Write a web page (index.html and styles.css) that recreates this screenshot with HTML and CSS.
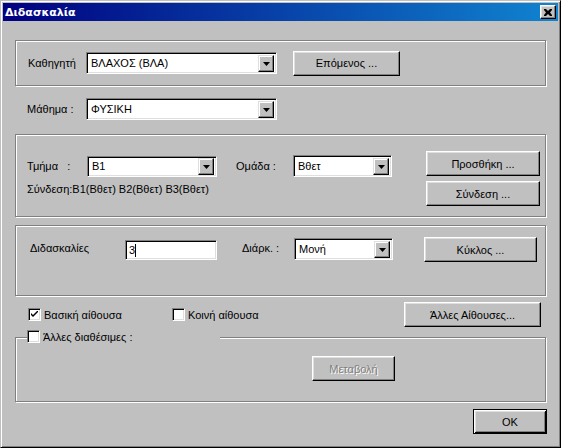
FILE: index.html
```html
<!DOCTYPE html>
<html>
<head>
<meta charset="utf-8">
<link rel="stylesheet" href="styles.css">
</head>
<body>
<div class="window">
  <div class="titlebar">
    <span class="title">Διδασκαλία</span>
    <span class="close"><svg width="8" height="7" viewBox="0 0 8 7"><path d="M0 0h2l2 2 2-2h2v1l-2 2.5 2 2.5v1h-2l-2-2-2 2h-2v-1l2-2.5-2-2.5z" fill="#000"/></svg></span>
  </div>
  <div class="client">
    <div class="group g1">
      <span class="lbl lbl-kath">Καθηγητή</span>
      <div class="combo c-kath"><span class="val">ΒΛΑΧΟΣ (ΒΛΑ)</span><span class="drop"><svg width="7" height="4" viewBox="0 0 7 4"><path d="M0 0h7l-3.5 4z" fill="#000"/></svg></span></div>
      <div class="btn b-next">Επόμενος ...</div>
    </div>

    <div class="row r-math">
      <span class="lbl lbl-math">Μάθημα :</span>
      <div class="combo c-math"><span class="val">ΦΥΣΙΚΗ</span><span class="drop"><svg width="7" height="4" viewBox="0 0 7 4"><path d="M0 0h7l-3.5 4z" fill="#000"/></svg></span></div>
    </div>

    <div class="group g2">
      <div class="g2-left">
        <div class="g2-row">
          <span class="lbl lbl-tm">Τμήμα&nbsp;&nbsp;&nbsp;:</span>
          <div class="combo c-tm"><span class="val">Β1</span><span class="drop"><svg width="7" height="4" viewBox="0 0 7 4"><path d="M0 0h7l-3.5 4z" fill="#000"/></svg></span></div>
          <span class="lbl lbl-om">Ομάδα :</span>
          <div class="combo c-om"><span class="val">Βθετ</span><span class="drop"><svg width="7" height="4" viewBox="0 0 7 4"><path d="M0 0h7l-3.5 4z" fill="#000"/></svg></span></div>
        </div>
        <div class="note">Σύνδεση:Β1(Βθετ) Β2(Βθετ) Β3(Βθετ)</div>
      </div>
      <div class="g2-right">
        <div class="btn b-side">Προσθήκη ...</div>
        <div class="btn b-side">Σύνδεση ...</div>
      </div>
    </div>

    <div class="group g3">
      <span class="lbl lbl-did">Διδασκαλίες</span>
      <div class="field f-did"><span class="val">3</span><span class="caret"></span></div>
      <span class="lbl lbl-diar">Διάρκ. :</span>
      <div class="combo c-om c-mon"><span class="val">Μονή</span><span class="drop"><svg width="7" height="4" viewBox="0 0 7 4"><path d="M0 0h7l-3.5 4z" fill="#000"/></svg></span></div>
      <div class="btn b-kyk">Κύκλος ...</div>
    </div>

    <div class="row r-checks">
      <label class="chk chk-bas"><span class="box"><svg width="7" height="7" viewBox="0 0 7 7"><path d="M0 2l2 2 5-5v2l-5 5-2-2z" fill="#000"/></svg></span>Βασική αίθουσα</label>
      <label class="chk chk-koi"><span class="box"></span>Κοινή αίθουσα</label>
      <div class="btn b-alles">Άλλες Αίθουσες...</div>
    </div>

    <div class="group g4">
      <label class="chk legend"><span class="box"></span>Άλλες διαθέσιμες :</label>
      <div class="btn disabled b-meta">Μεταβολή</div>
    </div>

    <div class="row r-ok">
      <div class="btn default b-ok">OK</div>
    </div>
  </div>
</div>
</body>
</html>
```

FILE: styles.css
```css
* { box-sizing: border-box; }
html, body { margin: 0; padding: 0; }
body {
  width: 561px;
  height: 448px;
  overflow: hidden;
  background: #c0c0c0;
  font-family: "Liberation Sans", Arial, sans-serif;
  font-size: 11px;
  color: #000;
}
.window {
  width: 561px;
  height: 448px;
  background: #c0c0c0;
  border: 1px solid;
  border-color: #c0c0c0 #000 #000 #c0c0c0;
  box-shadow: inset 1px 1px #fff, inset -1px -1px #808080;
  padding: 2px;
  display: flex;
  flex-direction: column;
}
.titlebar {
  height: 18px;
  flex: none;
  background: linear-gradient(to right, #000080, #1084d0);
  display: flex;
  align-items: center;
  justify-content: space-between;
  padding: 0 2px 0 2px;
}
.title {
  color: #fff;
  font-family: "DejaVu Sans", "Liberation Sans", sans-serif;
  font-weight: bold;
  font-size: 11px;
  padding-left: 0;
}
.close {
  width: 16px;
  height: 14px;
  background: #c0c0c0;
  border: 1px solid;
  border-color: #fff #000 #000 #fff;
  box-shadow: inset -1px -1px #808080, inset 1px 1px #dfdfdf;
  display: flex;
  align-items: center;
  justify-content: center;
}
.close svg { display: block; }
.client {
  flex: 1;
  padding: 0 0 0 12px;
  display: flex;
  flex-direction: column;
}
.group {
  width: 531px;
  border: 1px solid #808080;
  box-shadow: inset 1px 1px #fff, 1px 1px #fff;
  position: relative;
}
.row { display: flex; align-items: center; }
.lbl { white-space: nowrap; }

/* controls */
.combo {
  height: 21px;
  background: #fff;
  border: 1px solid;
  border-color: #808080 #fff #fff #808080;
  box-shadow: inset 1px 1px #000, inset -1px -1px #dfdfdf;
  padding: 2px;
  display: flex;
  align-items: center;
  justify-content: space-between;
}
.combo .val { padding-left: 2px; line-height: 13px; }
.drop {
  width: 16px;
  height: 17px;
  background: #c0c0c0;
  border: 1px solid;
  border-color: #dfdfdf #000 #000 #dfdfdf;
  box-shadow: inset -1px -1px #808080, inset 1px 1px #fff;
  display: flex;
  align-items: center;
  justify-content: center;
}
.drop svg { display: block; margin-top: 1px; }
.field {
  height: 20px;
  background: #fff;
  border: 1px solid;
  border-color: #808080 #fff #fff #808080;
  box-shadow: inset 1px 1px #000, inset -1px -1px #dfdfdf;
  padding: 2px 3px;
  display: flex;
  align-items: center;
}
.caret {
  width: 1px;
  height: 13px;
  background: #000;
  margin-left: 0;
}
.btn {
  height: 25px;
  background: #c0c0c0;
  border: 1px solid;
  border-color: #fff #000 #000 #fff;
  box-shadow: inset -1px -1px #808080, inset 1px 1px #dfdfdf;
  display: flex;
  align-items: center;
  justify-content: center;
  white-space: nowrap;
}
.btn.disabled {
  color: #808080;
  text-shadow: 1px 1px #fff;
}
.btn.default {
  border: 1px solid #000;
  box-shadow: inset 1px 1px #fff, inset -1px -1px #000, inset 2px 2px #dfdfdf, inset -2px -2px #808080;
}
.chk { display: flex; align-items: center; white-space: nowrap; }
.box {
  width: 13px;
  height: 13px;
  background: #fff;
  border: 1px solid;
  border-color: #808080 #fff #fff #808080;
  box-shadow: inset 1px 1px #000, inset -1px -1px #dfdfdf;
  margin-right: 3px;
  display: flex;
  align-items: center;
  justify-content: center;
}
.box svg { display: block; }

/* group 1 */
.g1 {
  margin-top: 19px;
  height: 46px;
  display: flex;
  align-items: center;
  padding-left: 12px;
}
.lbl-kath { width: 58px; overflow: hidden; }
.c-kath { width: 191px; height: 22px; }
.b-next { width: 107px; margin-left: 16px; }

/* Mathima */
.r-math { margin-top: 12px; padding-left: 12px; }
.lbl-math { width: 59px; }
.c-math { width: 191px; height: 22px; }

/* group 2 */
.g2 {
  margin-top: 14px;
  height: 83px;
  display: flex;
  padding-left: 11px;
}
.g2-left { width: 399px; padding-top: 20px; }
.g2-row { display: flex; align-items: center; }
.lbl-tm { width: 60px; }
.c-tm { width: 130px; height: 21px; }
.lbl-om { width: 57px; margin-left: 19px; }
.c-om { width: 99px; height: 22px; }
.note { margin-top: 6px; }
.g2-right { padding-top: 16px; display: flex; flex-direction: column; gap: 5px; }
.b-side { width: 114px; }

/* group 3 */
.g3 {
  margin-top: 8px;
  height: 71px;
  display: flex;
  align-items: flex-start;
  padding: 12px 0 0 14px;
}
.lbl-did { width: 95px; margin-top: 4px; }
.f-did { width: 92px; margin-top: 2px; }
.lbl-diar { width: 52px; margin-left: 25px; margin-top: 4px; }
.c-mon { margin-top: 0; }
.b-kyk { width: 113px; margin-left: 31px; margin-top: -1px; }

/* checks row */
.r-checks { margin-top: 6px; padding-left: 13px; height: 25px; }
.chk-bas { width: 144px; }
.chk-koi { width: 232px; }
.b-alles { width: 137px; }

/* group 4 */
.g4 {
  margin-top: 10px;
  height: 65px;
  display: flex;
  justify-content: flex-start;
  padding: 18px 0 0 296px;
}
.legend {
  position: absolute;
  left: 11px;
  top: -8px;
  width: 193px;
  height: 13px;
  background: #c0c0c0;
}
.b-meta { width: 83px; height: 25px; }

/* OK */
.r-ok { margin-top: 7px; padding-left: 458px; }
.b-ok { width: 74px; height: 25px; }
```
